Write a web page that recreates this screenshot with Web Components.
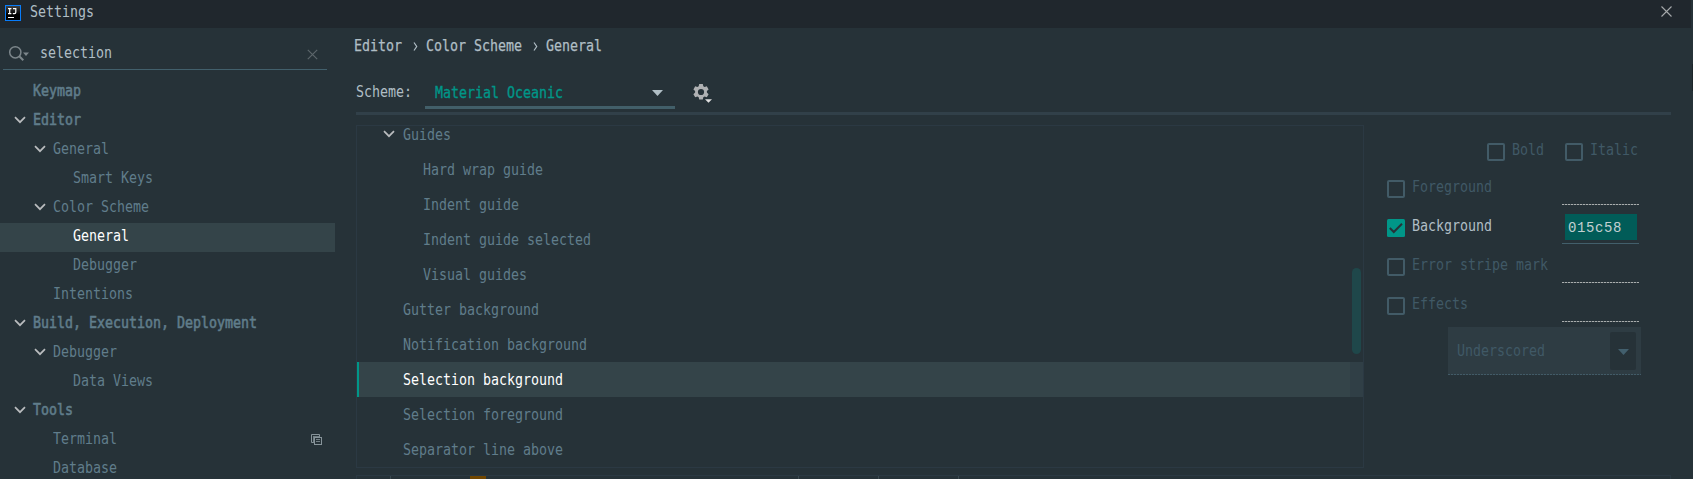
<!DOCTYPE html>
<html lang="en">
<head>
<meta charset="utf-8">
<title>Settings</title>
<style>
html,body{margin:0;height:479px;overflow:hidden;background:#263238}
body{font:16px "DejaVu Sans Mono",monospace;color:#b0bec5}
</style>
</head>
<body>
<settings-window></settings-window>
<script>
const make = (name, html, after) => customElements.define(name, class extends HTMLElement {
  connectedCallback() {
    if (this.shadowRoot) return;
    const r = this.attachShadow({ mode: 'open' });
    r.innerHTML = typeof html === 'function' ? html(this) : html;
    if (after) after(this, r);
  }
});

/* Text on a condensed 8px monospaced grid. */
make('mono-text', `<style>
:host{display:block;flex:none;height:20px;line-height:20px;white-space:pre}
span{display:inline-block;transform:scaleX(.8306);transform-origin:0 0}
</style><span><slot></slot></span>`, el => { el.style.width = el.textContent.length * 8 + 'px'; });

make('tree-chevron', `<style>:host{display:block;flex:none;width:12px;height:8px}svg{display:block}</style>
<svg width="12" height="8" fill="none" stroke="#b9bcbe" stroke-width="1.7"><path d="M1 1.200 6 6.200 11 1.200"/></svg>`);

make('title-bar', `<style>
:host{display:flex;align-items:flex-start;width:1691px;height:28px;background:#20272d;box-sizing:border-box;padding:5px 19px 0 5px}
svg{display:block;flex:none}
mono-text{margin:-3px auto 0 9px}
.close{margin-top:1px}
</style>
<svg width="16" height="16"><defs><linearGradient id="g" x2="0" y2="1"><stop stop-color="#444"/><stop offset=".6" stop-color="#000"/></linearGradient></defs>
<rect x=".5" y=".5" width="15" height="15" fill="url(#g)" stroke="#087cfa"/>
<path d="M3 3.700h3.400M4.700 3.700v5M3 8.600h3.400M8 3.700h2.800v3.600q0 1.300-1.400 1.300H7.800" fill="none" stroke="#fff" stroke-width="1.200"/><path d="M3 12.500h6" stroke="#fff"/></svg>
<mono-text>Settings</mono-text>
<svg class="close" width="11" height="11" stroke="#a5a9ab" stroke-width="1.100"><path d="M.5.5l10 10M10.500.5l-10 10"/></svg>`);

make('search-box', `<style>
:host{display:flex;box-sizing:border-box;margin:0 0 0 3px;width:324px;height:42px;border-bottom:1px solid #42606c;padding:0 9px 0 5px;align-items:flex-start}
svg{display:block;flex:none}.m{margin-top:17px}.x{margin-top:21px}
mono-text{margin:15px auto 0 11px;color:#b0bec5}
</style>
<svg class="m" width="21" height="17" fill="none" stroke="#7c868b" stroke-width="1.500"><circle cx="7.300" cy="7.300" r="5.600"/><path d="M11.300 11.300 15.300 15.300" stroke-width="2"/><path d="M15 7.500h6l-3 3.500z" fill="#7c868b" stroke="none"/></svg>
<mono-text>selection</mono-text>
<svg class="x" width="11" height="11" stroke="#5c666b" stroke-width="1.200"><path d="M.8.8l9.400 9.400M10.200.8.8 10.200"/></svg>`);

make('nav-row', el => `<style>
:host{display:flex;height:29px;width:335px;box-sizing:border-box;padding-left:${14 + 20 * +el.getAttribute('level')}px;color:#607d8b}
:host([bold]){-webkit-text-stroke:.6px}
:host([selected]){background:#344449;color:#fff}
.slot{width:19px;flex:none}tree-chevron{margin-top:9px}
mono-text{margin-top:3px}
svg{display:block;margin:8px 13px 0 auto}
</style><div class="slot">${el.hasAttribute('open') ? '<tree-chevron></tree-chevron>' : ''}</div>
<mono-text>${el.getAttribute('label')}</mono-text>
${el.hasAttribute('project') ? '<svg width="11" height="11" fill="none" stroke="#87949a"><path d="M2.500 8.500h-2v-8h8v2"/><rect x="3.500" y="3.500" width="7" height="7"/><path d="M5 5.500h4M5 7.500h4M2.500 3v6M2 2.500h7" stroke-opacity=".8"/></svg>' : ''}`);

make('nav-tree', `<style>:host{display:block;margin-top:8px}</style>
<nav-row level="0" label="Keymap" bold></nav-row>
<nav-row level="0" label="Editor" bold open></nav-row>
<nav-row level="1" label="General" open></nav-row>
<nav-row level="2" label="Smart Keys"></nav-row>
<nav-row level="1" label="Color Scheme" open></nav-row>
<nav-row level="2" label="General" selected></nav-row>
<nav-row level="2" label="Debugger"></nav-row>
<nav-row level="1" label="Intentions"></nav-row>
<nav-row level="0" label="Build, Execution, Deployment" bold open></nav-row>
<nav-row level="1" label="Debugger" open></nav-row>
<nav-row level="2" label="Data Views"></nav-row>
<nav-row level="0" label="Tools" bold open></nav-row>
<nav-row level="1" label="Terminal" project></nav-row>
<nav-row level="1" label="Database"></nav-row>`);

make('bread-crumbs', `<style>
:host{display:flex;height:33px;padding-top:8px;-webkit-text-stroke:.25px}
i{width:24px;flex:none;display:flex}svg{margin:6px 0 0 11px}
</style><mono-text>Editor</mono-text><i><svg width="5" height="9" fill="none" stroke="#b0bec5" stroke-width="1.200"><path d="M1 .5 3.700 4.500 1 8.500"/></svg></i><mono-text>Color Scheme</mono-text><i><svg width="5" height="9" fill="none" stroke="#b0bec5" stroke-width="1.200"><path d="M1 .5 3.700 4.500 1 8.500"/></svg></i><mono-text>General</mono-text>`);

make('scheme-bar', `<style>
:host{display:flex;height:43px;width:1315px;border-bottom:3px solid #314049;align-items:flex-start}
.l{margin-top:13px}
.combo{display:flex;margin-left:13px;width:250px;border-bottom:3px solid #425f69;box-sizing:border-box;height:40px;padding:14px 12px 0 10px;justify-content:space-between;color:#009688;-webkit-text-stroke:.35px}
svg{display:block;flex:none}.t{margin-top:7px}.g{margin:15px 0 0 18px}
</style><mono-text class="l">Scheme:</mono-text>
<div class="combo"><mono-text>Material Oceanic</mono-text><svg class="t" width="11" height="6"><path d="M0 0h11L5.500 6z" fill="#b0bec5"/></svg></div>
<svg class="g" width="19" height="19"><g fill="#afb1b3"><path fill-rule="evenodd" d="M6.200 0h3.600l.5 2.300 1.300.75 2.200-.75 1.800 3.100-1.700 1.600v1.600l1.700 1.600-1.800 3.100-2.200-.75-1.300.75-.5 2.300H6.200l-.5-2.300-1.300-.75-2.200.75L.4 10.200l1.700-1.600V7L.4 5.400l1.800-3.100 2.200.75 1.300-.75zM8 4.900a3.100 3.100 0 1 0 0 6.200 3.100 3.100 0 1 0 0-6.200z"/></g><path d="M11 14h8v5h-8z" fill="#263238"/><path d="M12 15.200h7l-3.500 3.600z" fill="#e0e0e0"/></svg>`);

make('option-row', el => `<style>
:host{display:flex;height:35px;flex:none;box-sizing:border-box;color:#607d8b;padding-left:${+el.getAttribute('level') ? 66 : 46}px}
:host([selected]){color:#fff;background:linear-gradient(#009688,#009688) 0 0/2px 100% no-repeat,linear-gradient(90deg,#344449 993px,#303f46 993px)}
:host([open]){padding-left:26px}tree-chevron{margin:13px 8px 0 0}mono-text{margin-top:8px}
</style>${el.hasAttribute('open') ? '<tree-chevron></tree-chevron>' : ''}<mono-text><slot></slot></mono-text>`,
(el, r) => { r.querySelector('mono-text').style.width = el.textContent.length * 8 + 'px'; });

make('option-list', `<style>
:host{display:block;position:relative;width:1006px;height:341px;overflow:hidden;border:1px solid #2b3943}
.rows{display:flex;flex-direction:column;margin-top:-9px}
.thumb{position:absolute;right:2px;top:142px;width:9px;height:86px;border-radius:4.500px;background:#1f474a}
</style><div class="rows">
<option-row open>Guides</option-row>
<option-row level="1">Hard wrap guide</option-row>
<option-row level="1">Indent guide</option-row>
<option-row level="1">Indent guide selected</option-row>
<option-row level="1">Visual guides</option-row>
<option-row>Gutter background</option-row>
<option-row>Notification background</option-row>
<option-row selected>Selection background</option-row>
<option-row>Selection foreground</option-row>
<option-row>Separator line above</option-row>
</div><div class="thumb"></div>`);

make('check-box', el => `<style>
:host{display:flex;height:20px;color:#405966}
svg{display:block;flex:none;margin-right:7px}
mono-text{margin-top:-3px}
:host([checked]){color:#b0bec5}
</style>${el.hasAttribute('checked')
? '<svg width="18" height="18"><rect width="18" height="18" rx="1.500" fill="#009688"/><path d="M2.800 9 6.800 13 15 4.800" fill="none" stroke="#263238" stroke-width="2"/></svg>'
: '<svg width="18" height="18"><rect x="1" y="1" width="16" height="16" rx="1" fill="none" stroke="#425b67" stroke-width="2"/></svg>'}
<mono-text>${el.getAttribute('label')}</mono-text>`);

make('color-line', el => `<style>
:host{display:flex;height:39px;width:252px;justify-content:space-between}
.f{width:77px;height:25px;flex:none;box-sizing:border-box;background:repeating-linear-gradient(90deg,#a9adad 0 2px,#4d585d 2px 3px) 0 24px/100% 1px no-repeat}
:host([value]) .f{background:linear-gradient(#425f6b,#425f6b) 0 24px/100% 1px no-repeat}
:host([value]) check-box{margin-top:-.5px}
.v{position:relative;top:-5px;margin-left:3px;width:72px;height:26px;box-sizing:border-box;padding:5px 0 0 3px;background:#015c58;color:#c3cfd1;font:14px/18px "Liberation Mono",monospace;letter-spacing:.6px}
</style><check-box label="${el.getAttribute('label')}" ${el.hasAttribute('value') ? 'checked' : ''}></check-box>
<div class="f">${el.hasAttribute('value') ? `<div class="v">${el.getAttribute('value')}</div>` : ''}</div>`);

make('attributes-form', `<style>
:host{display:block;margin-left:23px;padding-top:18px;width:254px}
.top{display:flex;margin-left:100px;height:37px}.top check-box{width:78px;flex:none}
.drop{display:flex;justify-content:space-between;box-sizing:border-box;margin:-9px 0 0 61px;width:193px;height:48px;background:repeating-linear-gradient(90deg,#425b67 0 2px,#2e3c43 2px 3px) 0 47px/100% 1px no-repeat,#2e3c43;color:#405966;padding:14px 5px 0 9px}
.b{width:26px;height:38px;margin-top:-9px;background:#263238;border-radius:2px}
svg{display:block;margin:17px 0 0 8px}
</style><div class="top"><check-box label="Bold"></check-box><check-box label="Italic"></check-box></div>
<color-line label="Foreground"></color-line>
<color-line label="Background" value="015c58"></color-line>
<color-line label="Error stripe mark"></color-line>
<color-line label="Effects"></color-line>
<div class="drop"><mono-text>Underscored</mono-text><div class="b"><svg width="11" height="6"><path d="M0 0h11L5.500 6z" fill="#425f6d"/></svg></div></div>`);

make('code-preview', `<style>
:host{display:flex;margin-top:7px;height:3px;width:1313px;border:1px solid #2b3943}
i{width:1px;background:#3a4950;height:3px}b{width:16px;height:3px;background:#704600}
</style><i style="margin-left:33px"></i><b style="margin-left:79px"></b><i style="margin-left:312px"></i><i style="margin-left:79px"></i><i style="margin-left:79px"></i>`);

make('settings-window', `<style>
:host{display:block;width:1693px;height:479px;overflow:hidden;position:relative;background:#263238}
.body{display:flex}.side{width:354px;flex:none;height:451px;overflow:hidden}
main{width:1337px;height:451px;overflow:hidden}
scheme-bar,.mid,code-preview{margin-left:2px}
.mid{display:flex;margin-top:10px;height:343px}
.edge{position:absolute;right:0;top:64px;width:1px;height:27px;background:#1c2529}
</style><title-bar></title-bar><div class="body"><div class="side"><search-box></search-box><nav-tree></nav-tree></div>
<main><bread-crumbs></bread-crumbs><scheme-bar></scheme-bar><div class="mid"><option-list></option-list><attributes-form></attributes-form></div><code-preview></code-preview></main></div><div class="edge"></div>`);
</script>
</body>
</html>
